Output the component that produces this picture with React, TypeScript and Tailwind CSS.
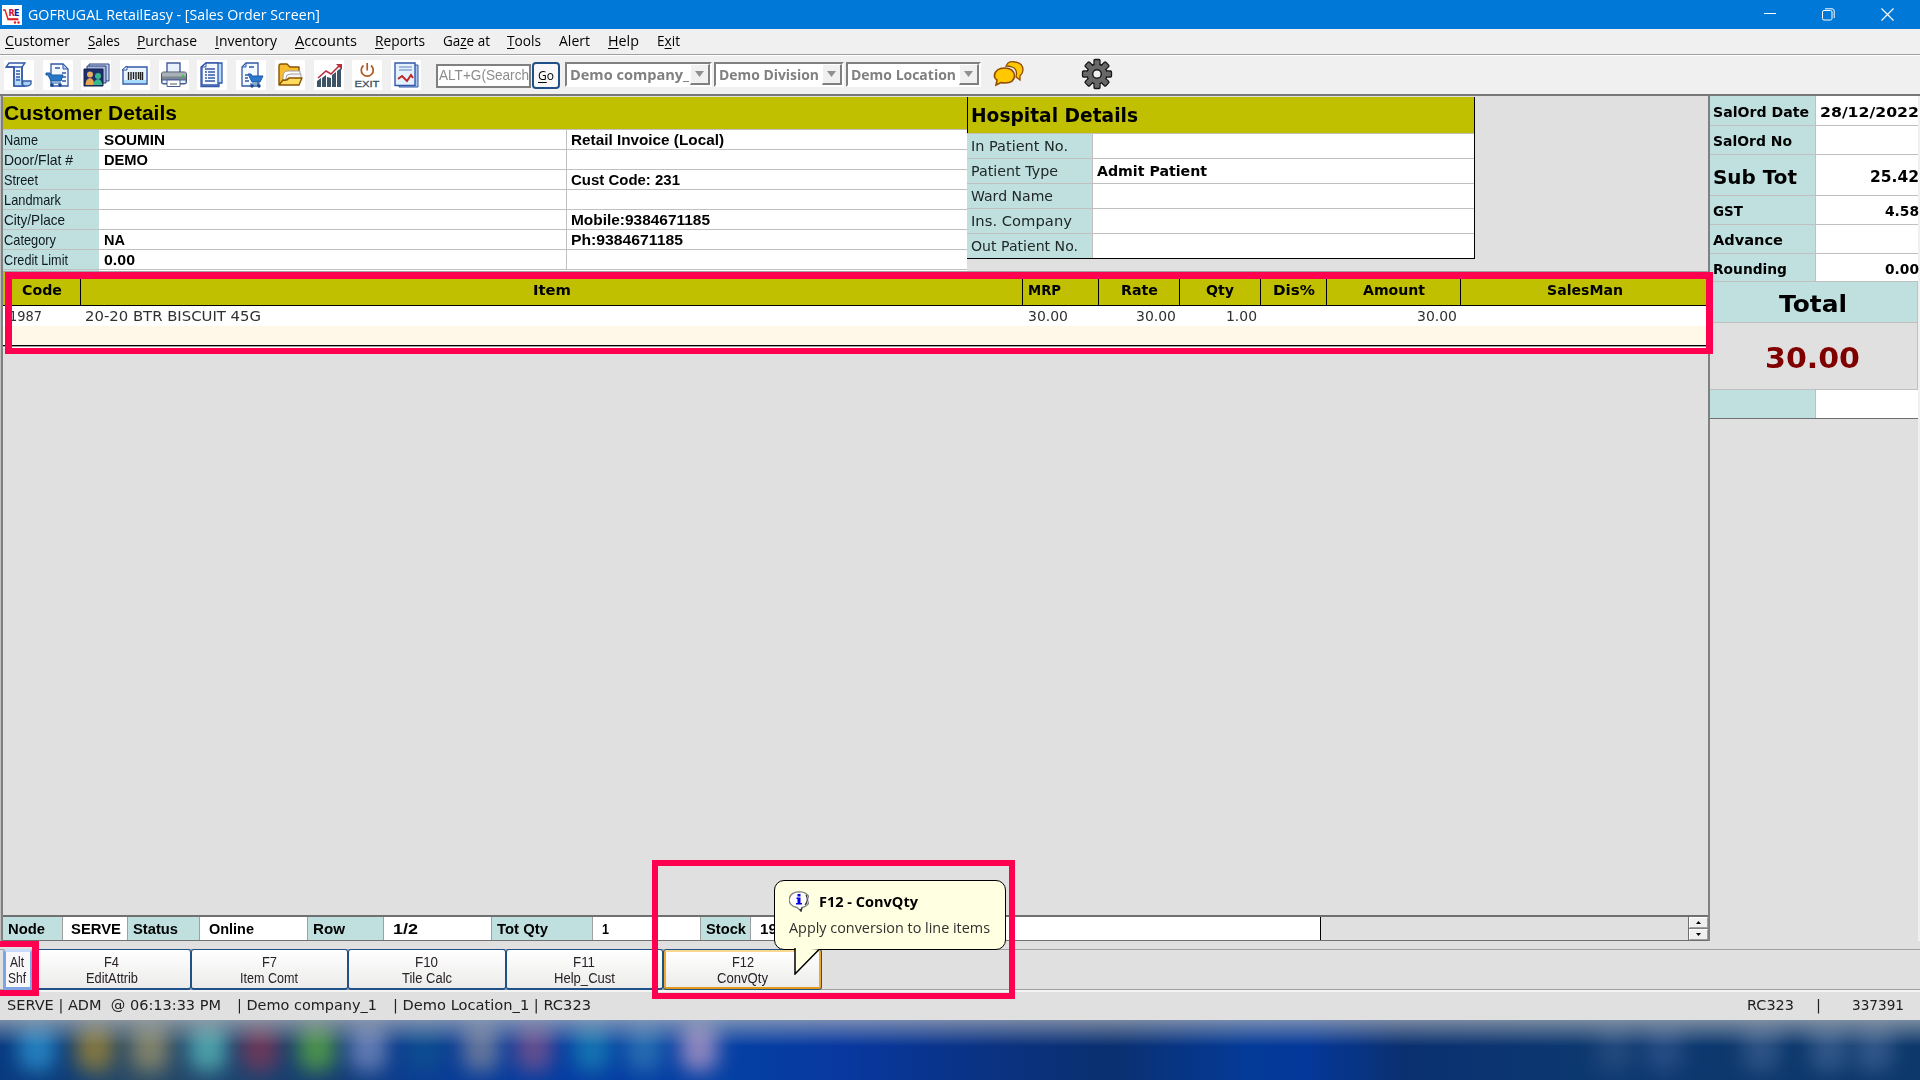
import { useLayoutEffect, useRef, type ReactNode } from "react";

const SANS = "font-['Liberation_Sans',sans-serif]";
const UI = "font-['Open_Sans',sans-serif]";
const WIDE = "font-['DejaVu_Sans',sans-serif]";

function Fit({ w, className = "", children }: { w: number; className?: string; children: ReactNode }) {
  const box = useRef<HTMLSpanElement>(null);
  const text = useRef<HTMLSpanElement>(null);
  useLayoutEffect(() => {
    if (!box.current || !text.current) return;
    text.current.style.transform = "none";
    const natural = text.current.getBoundingClientRect().width;
    box.current.style.width = `${w}px`;
    text.current.style.transform = `scaleX(${w / natural})`;
  }, [w]);
  return (
    <span ref={box} className={`inline-flex shrink-0 whitespace-pre leading-none ${className}`}>
      <span ref={text} className="inline-block shrink-0 origin-left">{children}</span>
    </span>
  );
}

function Logo() {
  return (
    <svg width="20" height="20" viewBox="0 0 20 20">
      <rect width="20" height="20" fill="#fff" />
      <path d="M1 5h2l3 9h10" fill="none" stroke="#e02020" strokeWidth="1.4" />
      <path d="M5.5 14.5h11" stroke="#e02020" strokeWidth="1.6" />
      <circle cx="13" cy="17.5" r="1.2" fill="#e02020" />
      <circle cx="16.5" cy="17.5" r="1.2" fill="#e02020" />
      <text x="6.5" y="10.5" fontSize="8" fontWeight="bold" fontFamily="DejaVu Sans" fill="#d01030" textLength="5.5">R</text>
      <text x="12" y="10.5" fontSize="8" fontWeight="bold" fontFamily="DejaVu Sans" fill="#1020a0" textLength="6">E</text>
    </svg>
  );
}

function TitleBar() {
  return (
    <header className="flex h-[29px] shrink-0 items-center bg-[#0078d7] text-white">
      <div className="ml-[2px] mt-px"><Logo /></div>
      <Fit w={292} className={`ml-[6px] text-[15px] ${UI}`}>GOFRUGAL RetailEasy - [Sales Order Screen]</Fit>
      <div className="ml-auto mr-[26px] flex items-center gap-[46px]">
        <svg width="12" height="12" viewBox="0 0 12 12" stroke="#fff"><path d="M0 4.5h12" /></svg>
        <svg width="13" height="13" viewBox="0 0 13 13" fill="none" stroke="#fff">
          <rect x="0.5" y="2.5" width="9.5" height="9.5" rx="1.5" />
          <path d="M3 .8h7a2.2 2.2 0 0 1 2.2 2.2v7" />
        </svg>
        <svg width="13" height="13" viewBox="0 0 13 13" stroke="#fff" strokeWidth="1.2"><path d="M.5.5l12 12M12.5.5l-12 12" /></svg>
      </div>
    </header>
  );
}

const menu: [string, string, string, number, string][] = [
  ["", "C", "ustomer", 65, "ml-[5px]"],
  ["", "S", "ales", 32, "ml-[18px]"],
  ["", "P", "urchase", 60, "ml-[17px]"],
  ["", "I", "nventory", 62, "ml-[18px]"],
  ["", "A", "ccounts", 62, "ml-[18px]"],
  ["", "R", "eports", 50, "ml-[18px]"],
  ["Ga", "z", "e at", 47, "ml-[18px]"],
  ["", "T", "ools", 34, "ml-[17px]"],
  ["Alert", "", "", 31, "ml-[18px]"],
  ["", "H", "elp", 31, "ml-[18px]"],
  ["E", "x", "it", 23, "ml-[18px]"],
];

function MenuBar() {
  return (
    <nav className={`flex h-[26px] shrink-0 items-center border-b border-[#a0a0a0] bg-[#f0f0f0] pb-[2px] text-sm text-black ${UI}`}>
      {menu.map(([a, u, b, w, m]) => (
        <Fit key={a + u + b} w={w} className={m}>
          {a}<span className="underline decoration-black decoration-[1px] underline-offset-[2px] [text-decoration-skip-ink:none]">{u}</span>{b}
        </Fit>
      ))}
    </nav>
  );
}

const paper = "#f4f9ff";
const ink = "#3358a8";

const toolIcons: ReactNode[] = [
  <g key="scroll" fill={paper} stroke={ink} strokeWidth="1.3">
    <path d="M5 3h16l-3 4v16q0 3 3 3H10V7H2z" />
    <path d="M10 18h8v5q0 3 3 3H10z" fill="#b8dcf8" stroke="none" />
    <path d="M10 7v19h11q-3 0-3-3V7M2 7h16M12 11h4M12 14h4M12 17h4M12 20h4" fill="none" strokeWidth="1.6" />
    <path d="M19 21h8v3q-1 2-4 2h-3q-2-1-1-5z" fill="#a8d0f0" />
  </g>,
  <g key="doccart">
    <path d="M8 4h12l5 5v17H8z" fill={paper} stroke={ink} strokeWidth="1.3" />
    <path d="M20 4v5h5z" fill="#b8d4f0" stroke={ink} />
    <path d="M12 8h5M19 13h4M19 17h4M19 21h4" stroke={ink} strokeWidth="1.5" />
    <path d="M3 13h4l1 2h12l-2 6H8L5 15H3z" fill="#2878c8" stroke="#1a5aa0" />
    <path d="M8 23h10" stroke="#1a5aa0" />
    <circle cx="9" cy="25" r="1.8" fill="#184888" /><circle cx="17" cy="25" r="1.8" fill="#184888" />
  </g>,
  <g key="people">
    <path d="M8 4h20v17H8z" fill="#c8d4ec" stroke="#2a4080" /><path d="M6 6h19v17H6z" fill="#a8b8dc" stroke="#2a4080" />
    <path d="M3 9h19v17H3z" fill="#1c2e6c" stroke="#14204c" />
    <circle cx="9" cy="14.5" r="3" fill="#e8b060" /><path d="M4.500 25q0-6 4.500-7 4.500 1 4 7z" fill="#e8a850" />
    <circle cx="17" cy="16" r="3" fill="#38b890" /><path d="M12 25q1-5 5-6 4 1 4.500 6z" fill="#38b890" />
  </g>,
  <g key="barcode">
    <path d="M6 7h21v17H3V10z" fill="#eaf4ff" stroke={ink} strokeWidth="1.4" />
    <path d="M4 20h22v3H4z" fill="#a8dcff" />
    <path d="M8.500 12v8M11 12v8M13.500 12v7M16 12v8M18.500 12v7M20.500 12v8M22.500 12v8" stroke="#202020" strokeWidth="1.4" />
    <path d="M2 10l5-4v4z" fill="#fff" stroke={ink} />
  </g>,
  <g key="printer">
    <path d="M8 3h13v10H8z" fill="#e8f2ff" stroke="#445c98" strokeWidth="1.4" />
    <rect x="2.500" y="12" width="25" height="12" rx="2" fill="#7c8690" stroke="#4a5560" />
    <path d="M3 12.500h24v4H3z" fill="#a8b0b8" /><circle cx="24" cy="16" r="1.300" fill="#30d030" />
    <path d="M3 20h24v3.500H3z" fill="#eaf4ff" stroke="#486098" />
    <path d="M8 20h13v6.500H8z" fill="#fff" stroke="#486098" /><path d="M11 24h7" stroke="#556" />
  </g>,
  <g key="report">
    <path d="M9 3h16v20h-3v3.500H4V7z" fill="#b8dcff" stroke={ink} strokeWidth="1.3" />
    <path d="M9 3h12v22H5V7z" fill={paper} stroke={ink} strokeWidth="1.3" /><path d="M5 7h4V3z" fill="#dcecff" stroke={ink} />
    <path d="M8 9h10M8 12h2m1 0h7M8 15h2m1 0h7M8 18h2m1 0h7M8 21h10" stroke={ink} strokeWidth="1.5" />
  </g>,
  <g key="cartdoc">
    <path d="M10 3h12v23H6V7z" fill={paper} stroke={ink} strokeWidth="1.3" /><path d="M6 7h4V3z" fill="#b8d4f0" stroke={ink} />
    <path d="M13 7h5M9 15h3M9 18h3M9 21h4" stroke={ink} strokeWidth="1.6" />
    <path d="M12 14h3l1 2h11l-3 6h-8z" fill="#2878d0" stroke="#1a5aa0" />
    <path d="M14 24h10" stroke="#1a5aa0" /><circle cx="16" cy="26" r="1.700" fill="#184888" /><circle cx="23" cy="26" r="1.700" fill="#184888" />
  </g>,
  <g key="folder" strokeLinejoin="round">
    <path d="M4 24V6q0-2 2-2h6l3 3h9v5v10z" fill="#f8bc30" stroke="#8a5400" strokeWidth="1.4" />
    <path d="M8 20v-3q0-6 5-6h12v9z" fill="#fff" stroke="#a0a0a0" />
    <path d="M11 19v-1q0-4 4-4h11v6z" fill="#f4f4f4" stroke="#a0a0a0" />
    <path d="M4 25l4-5q4 1 6-2h13l-3 7z" fill="#ffdc60" stroke="#8a5400" strokeWidth="1.4" />
  </g>,
  <g key="chart">
    <path d="M3 27v-6l4-3v9zM8 27v-9l4-3v12zM13 27V17l4 1v9zM18 27V15l4-3v15zM23 27V11l4-3v19z" fill="#3d5366" />
    <path d="M4 18l8-7 5 3 9-9" fill="none" stroke="#b83040" strokeWidth="1.6" /><path d="M22 4h6v6z" fill="#b83040" />
  </g>,
  <g key="exit">
    <path d="M11.500 5.500a6 6 0 1 0 7.500 0M15.200 3v7.500" fill="none" stroke="#b05820" strokeWidth="1.7" />
    <text x="2.500" y="27" fontSize="9.500" fontFamily="Liberation Sans" fill="#3d5366" stroke="#3d5366" strokeWidth=".3" textLength="25" lengthAdjust="spacingAndGlyphs">EXIT</text>
  </g>,
  <g key="graphdoc">
    <path d="M8 5h19v22H8z" fill="#b0c8f0" stroke={ink} />
    <path d="M4 3h20v22.500H4z" fill="#e4f2ff" stroke={ink} strokeWidth="1.4" />
    <path d="M8 7h13M8 10h13" stroke="#6080b8" strokeWidth="1.2" />
    <path d="M7 19l4-3 5 5 4-6 2 3" fill="none" stroke="#c02828" strokeWidth="2" />
  </g>,
];

function Combo({ text, w, box }: { text: string; w: number; box: string }) {
  return (
    <div className={`flex h-[25px] items-center border-2 border-b-white border-r-white border-l-[#808080] border-t-[#808080] bg-white ${box}`}>
      <Fit w={w} className={`ml-[3px] text-[14px] font-bold text-[#808080] ${UI}`}>{text}</Fit>
      <div className="ml-auto flex h-[21px] w-[20px] items-center justify-center border border-b-2 border-r-2 border-[#808080] border-l-white border-t-white bg-[#f0f0f0]">
        <svg width="9" height="6" viewBox="0 0 9 6"><path d="M0 0h9L4.500 6z" fill="#909090" /></svg>
      </div>
    </div>
  );
}

function Gear() {
  const teeth = [0, 45, 90, 135, 180, 225, 270, 315];
  return (
    <svg width="32" height="32" viewBox="-16 -16 32 32">
      {teeth.map((a) => <rect key={a} x="-3" y="-14.500" width="6" height="8" rx="1" fill="#686868" stroke="#181818" strokeWidth="1.300" transform={`rotate(${a})`} />)}
      <circle r="10" fill="#686868" stroke="#181818" strokeWidth="1.300" />
      {teeth.map((a) => <rect key={a} x="-2.300" y="-12" width="4.600" height="5" fill="#686868" transform={`rotate(${a})`} />)}
      <circle r="4.300" fill="#f0f0f0" stroke="#181818" strokeWidth="1.500" />
    </svg>
  );
}

function Toolbar() {
  return (
    <div className="flex h-[41px] shrink-0 items-start border-b-2 border-[#787878] border-t border-t-white bg-[#f0f0f0] pl-1">
      <div className="mt-[4px] flex gap-[8.7px]">
        {toolIcons.map((icon, i) => (
          <svg key={i} width="30" height="30" viewBox="0 0 30 30" className="bg-white">{icon}</svg>
        ))}
      </div>
      <div className="ml-[15px] mt-[8px] flex h-[24px] w-[95px] items-center border-2 border-[#808080] bg-white pb-[3px]">
        <Fit w={90} className="ml-px text-[15px] text-[#8c8c8c] font-['Liberation_Sans',sans-serif]">ALT+G(Search</Fit>
      </div>
      <div className={`ml-px mt-[6px] flex h-[27px] w-[28px] items-center justify-center rounded-[4px] border-2 border-[#1f5088] bg-[#f8f8f8] pb-px text-[13px] font-medium ${UI}`}>
        <Fit w={16}><span className="underline underline-offset-2">G</span>o</Fit>
      </div>
      <div className="ml-[5px] mt-[6px] flex gap-[2px]">
        <Combo text="Demo company_" w={119} box="w-[147px]" />
        <Combo text="Demo Division" w={100} box="w-[130px]" />
        <Combo text="Demo Location" w={105} box="w-[135px]" />
      </div>
      <svg width="32" height="28" viewBox="0 0 32 28" className="ml-[12px] mt-[4px]" fill="#ffc800" stroke="#904c00" strokeWidth="1.300">
        <path d="M13 6l2-3q3-2 7-1 8 1 8 8 0 3-3 6v4l-4-3q2-8-4-10-2-1-6-1z" />
        <path d="M11.500 8q9 0 10 7.500 0 7.500-10 7.500-2 0-3.500-.5L3 25l1-5q-3-2-2.500-5Q3 8 11.500 8z" strokeWidth="1.600" />
      </svg>
      <div className="ml-[56px] mt-[2px]"><Gear /></div>
    </div>
  );
}

type Cell = [string, number] | null;
const customer: { label: [string, number]; value: Cell; extra: Cell }[] = [
  { label: ["Name", 34], value: ["SOUMIN", 61], extra: ["Retail Invoice (Local)", 153] },
  { label: ["Door/Flat #", 69], value: ["DEMO", 44], extra: null },
  { label: ["Street", 34], value: null, extra: ["Cust Code: 231", 109] },
  { label: ["Landmark", 57], value: null, extra: null },
  { label: ["City/Place", 61], value: null, extra: ["Mobile:9384671185", 139] },
  { label: ["Category", 52], value: ["NA", 21], extra: ["Ph:9384671185", 112] },
  { label: ["Credit Limit", 64], value: ["0.00", 31], extra: null },
];

function CustomerDetails() {
  return (
    <section className={`w-[964px] shrink-0 ${SANS}`}>
      <div className="flex h-[32px] items-center bg-[#c0c000] pl-px">
        <Fit w={173} className="text-[20px] font-bold">Customer Details</Fit>
      </div>
      {customer.map((r) => (
        <div key={r.label[0]} className="flex h-[20px] border-t border-[#c0c0c0] bg-white text-[14.500px]">
          <div className="flex w-[96px] items-center bg-[#c0e0e0] pl-px pt-[2px] text-[#101820]"><Fit w={r.label[1]}>{r.label[0]}</Fit></div>
          <div className="flex w-[468px] items-center border-r border-[#c0c0c0] pl-[5px] pt-[2px] font-bold">{r.value && <Fit w={r.value[1]}>{r.value[0]}</Fit>}</div>
          <div className="flex flex-1 items-center pl-[4px] pt-[2px] font-bold">{r.extra && <Fit w={r.extra[1]}>{r.extra[0]}</Fit>}</div>
        </div>
      ))}
      <div className="flex h-[2px] border-t border-[#c0c0c0] bg-white"><div className="w-[96px] bg-[#c0e0e0]" /></div>
    </section>
  );
}

const hospital: [string, number][] = [
  ["In Patient No.", 97], ["Patient Type", 87], ["Ward Name", 82], ["Ins. Company", 101], ["Out Patient No.", 107],
];

function HospitalDetails() {
  return (
    <section className={`h-[162px] w-[508px] shrink-0 border-b border-r border-black ${WIDE}`}>
      <div className="flex h-[36px] items-center border-l border-black bg-[#c0c000] pl-[3px] pt-px">
        <Fit w={167} className="text-[19.500px] font-bold">Hospital Details</Fit>
      </div>
      {hospital.map(([t, w], i) => (
        <div key={t} className="flex h-[25px] border-t border-[#c0c0c0] bg-white text-[13.500px]">
          <div className="flex w-[126px] items-center border-r border-[#c0c0c0] bg-[#c0e0e0] pl-[4px] pt-[2px] text-[#202828]"><Fit w={w}>{t}</Fit></div>
          <div className="flex items-center pl-[4px] pt-[2px] font-bold">{i === 1 && <Fit w={110}>Admit Patient</Fit>}</div>
        </div>
      ))}
    </section>
  );
}

const columns: { name: string; w: number; box: string; val?: [string, number]; cell: string }[] = [
  { name: "Code", w: 40, box: "w-[78px] justify-center border-r pl-px", val: ["1987", 33], cell: "w-[78px] pl-[6px]" },
  { name: "Item", w: 38, box: "w-[942px] justify-center border-r", val: ["20-20 BTR BISCUIT 45G", 176], cell: "w-[942px] pl-[4px]" },
  { name: "MRP", w: 33, box: "w-[76px] pl-[5px] border-r", val: ["30.00", 40], cell: "w-[76px] pl-[5px]" },
  { name: "Rate", w: 37, box: "w-[81px] justify-center border-r", val: ["30.00", 40], cell: "w-[81px] justify-end pr-[4px]" },
  { name: "Qty", w: 28, box: "w-[81px] justify-center border-r", val: ["1.00", 31], cell: "w-[81px] justify-end pr-[4px]" },
  { name: "Dis%", w: 42, box: "w-[66px] justify-center border-r", cell: "w-[66px]" },
  { name: "Amount", w: 62, box: "w-[134px] justify-center border-r", val: ["30.00", 40], cell: "w-[134px] justify-end pr-[4px]" },
  { name: "SalesMan", w: 76, box: "flex-1 justify-center", cell: "flex-1" },
];

function ItemGrid() {
  return (
    <section className={`border-t border-[#a0a0a0] ${WIDE}`}>
      <div className="flex h-[34px] border-b border-black bg-[#c0c000] text-[13.500px] font-bold">
        {columns.map((c) => (
          <div key={c.name} className={`flex items-center border-black pt-[5px] ${c.box}`}><Fit w={c.w}>{c.name}</Fit></div>
        ))}
      </div>
      <div className="flex h-[20px] bg-white text-[13.500px] text-[#303030]">
        {columns.map((c) => (
          <div key={c.name} className={`flex items-center pt-[2px] ${c.cell}`}>{c.val && <Fit w={c.val[1]}>{c.val[0]}</Fit>}</div>
        ))}
      </div>
      <div className="h-[20px] border-b border-black bg-[#fff8e8]" />
      <div className="h-[2px] border-b border-white bg-[#a0a0a0]" />
    </section>
  );
}

const footer: { t: string; w: number; box: string }[] = [
  { t: "Node", w: 37, box: "w-[60px] bg-[#c0e0e0] pl-[5px]" },
  { t: "SERVE", w: 50, box: "w-[65px] pl-[8px]" },
  { t: "Status", w: 45, box: "w-[72px] bg-[#c0e0e0] pl-[5px]" },
  { t: "Online", w: 45, box: "w-[108px] pl-[9px]" },
  { t: "Row", w: 32, box: "w-[76px] bg-[#c0e0e0] pl-[5px]" },
  { t: "1/2", w: 25, box: "w-[108px] pl-[9px]" },
  { t: "Tot Qty", w: 51, box: "w-[101px] bg-[#c0e0e0] pl-[5px]" },
  { t: "1", w: 7, box: "w-[108px] pl-[9px]" },
  { t: "Stock", w: 40, box: "w-[50px] bg-[#c0e0e0] pl-[5px]" },
  { t: "19", w: 17, box: "w-[570px] pl-[9px]" },
];

function GridFooter() {
  return (
    <div className={`flex h-[26px] shrink-0 border-b border-t-2 border-[#707070] ${SANS}`}>
      {footer.map((f, i) => (
        <div key={f.t} className={`flex items-center pt-px text-[14px] font-bold ${f.box} ${i === 9 ? "border-r border-black" : "border-r border-[#a0a0a0]"} ${i % 2 ? "bg-white" : ""}`}>
          <Fit w={f.w}>{f.t}</Fit>
        </div>
      ))}
      <div className="flex-1" />
      <div className="flex w-[20px] flex-col gap-px border-l border-[#707070] bg-[#808080]">
        {["M0 3h5L2.500 0z", "M0 0h5L2.500 3z"].map((d) => (
          <div key={d} className="flex flex-1 items-center justify-center border border-b-[#a0a0a0] border-r-[#a0a0a0] border-l-white border-t-white bg-[#f0f0f0]">
            <svg width="5" height="3" viewBox="0 0 5 3"><path d={d} /></svg>
          </div>
        ))}
      </div>
    </div>
  );
}

const totals: { l: string; lw: number; v?: string; vw?: number; h: string; lc?: string; vc?: string }[] = [
  { l: "SalOrd Date", lw: 96, v: "28/12/2022", vw: 99, h: "h-[30px]" },
  { l: "SalOrd No", lw: 79, h: "h-[29px]" },
  { l: "Sub Tot", lw: 84, v: "25.42", vw: 49, h: "h-[41px]", lc: "text-[20px]", vc: "text-[15px]" },
  { l: "GST", lw: 30, v: "4.58", vw: 34, h: "h-[29px]" },
  { l: "Advance", lw: 70, h: "h-[29px]" },
  { l: "Rounding", lw: 74, v: "0.00", vw: 34, h: "h-[28px]" },
];

function Totals() {
  return (
    <aside className={`flex w-[208px] shrink-0 flex-col font-bold ${WIDE}`}>
      {totals.map((r) => (
        <div key={r.l} className={`flex border-b border-[#c0c0c0] bg-white text-[13.500px] ${r.h}`}>
          <div className={`flex w-[106px] items-center border-r border-[#c0c0c0] bg-[#c0e0e0] pl-[3px] pt-[4px] ${r.lc ?? ""}`}><Fit w={r.lw}>{r.l}</Fit></div>
          <div className={`-mr-px flex flex-1 items-center justify-end pt-[4px] ${r.vc ?? ""}`}>{r.v && <Fit w={r.vw ?? 0}>{r.v}</Fit>}</div>
        </div>
      ))}
      <div className="flex h-[41px] items-center justify-center border-b border-r border-[#c0c0c0] bg-[#c0e0e0] pr-[2px] pt-[4px] text-[23px]"><Fit w={68}>Total</Fit></div>
      <div className="flex h-[67px] items-center justify-center border-b border-r border-[#c0c0c0] pr-[2px] pt-[4px] text-[29px] text-[#800000]"><Fit w={95}>30.00</Fit></div>
      <div className="flex h-[29px] border-b border-[#707070] bg-white"><div className="w-[106px] border-r border-[#c0c0c0] bg-[#c0e0e0]" /></div>
    </aside>
  );
}

const keys: [string, number, string, number][] = [
  ["F4", 15, "EditAttrib", 52], ["F7", 15, "Item Comt", 58], ["F10", 23, "Tile Calc", 50], ["F11", 22, "Help_Cust", 61], ["F12", 22, "ConvQty", 51],
];

function KeyBar() {
  return (
    <div className={`flex h-[41px] shrink-0 border-b border-t border-[#a0a0a0] pl-[3px] text-[14px] text-[#282028] ${SANS}`}>
      <div className="-my-px flex w-[30px] flex-col items-center gap-[2px] rounded-[3px] border-[3px] border-[#7fa4e4] border-t-[#c8dcfa] bg-[#f8f8f8] pr-[2px] pt-[3px]">
        <Fit w={14}>Alt</Fit><Fit w={18}>Shf</Fit>
      </div>
      {keys.map(([k, kw, n, nw], i) => (
        <div
          key={k}
          className={`-my-px flex flex-col items-center gap-[2px] rounded-[3px] bg-gradient-to-b from-white to-[#ececea] ${
            i === 4
              ? "w-[159px] border-[3px] border-x-[#eeaa30] border-b-[#e09a18] border-t-[#fbd890] pt-[3px] outline outline-1 -outline-offset-1 outline-[#1f5088]"
              : "w-[157.500px] border border-b-2 border-[#1f5088] pt-[5px]"
          }`}
        >
          <Fit w={kw}>{k}</Fit><Fit w={nw}>{n}</Fit>
        </div>
      ))}
    </div>
  );
}

function StatusBar() {
  return (
    <div className={`flex h-[30px] shrink-0 items-center border-t-2 border-[#f4f4f4] bg-[#e0e0e0] pl-[7px] text-[13.500px] text-[#202020] ${WIDE}`}>
      <Fit w={214}>SERVE | ADM  @ 06:13:33 PM</Fit>
      <Fit w={140} className="ml-[16px]">| Demo company_1</Fit>
      <Fit w={198} className="ml-[16px]">| Demo Location_1 | RC323</Fit>
      <Fit w={47} className="ml-auto">RC323</Fit>
      <Fit w={5} className="ml-[22px]">|</Fit>
      <Fit w={52} className="ml-[31px] mr-[16px]">337391</Fit>
    </div>
  );
}

const glows: string[] = [
  "left-[18px] bg-[#2a8ccc]", "left-[76px] bg-[#94803a]", "left-[131px] bg-[#8f8c6c]", "left-[189px] bg-[#55b0b4]",
  "left-[241px] bg-[#783858]", "left-[298px] bg-[#55a048]", "left-[349px] bg-[#6f86bc]", "left-[405px] bg-[#0f5090]",
  "left-[462px] bg-[#74809c]", "left-[515px] bg-[#74528e]", "left-[573px] bg-[#187cb4]", "left-[625px] bg-[#2c74b4]", "left-[680px] bg-[#a492c4]",
  "left-[1596px] bg-[#264c80]", "left-[1645px] bg-[#2c5088]", "left-[1742px] bg-[#345888]", "left-[1810px] bg-[#385c8c]", "left-[1855px] bg-[#385c8c]",
];

function Taskbar() {
  return (
    <div className="relative h-[60px] shrink-0 overflow-hidden bg-[linear-gradient(90deg,#083a80_0%,#0c3c78_3%,#2a4a64_7%,#1c4470_12%,#143c70_17%,#0c3c90_21%,#053ca0_28%,#0540a4_38%,#0838a0_44%,#0a3280_52%,#0a3070_58%,#043a98_65%,#04389a_68%,#0a3070_73%,#0c3870_82%,#0c386c_100%)]">
      {glows.map((g) => <div key={g} className={`absolute top-[2px] h-[50px] w-[38px] rounded-[16px] opacity-85 blur-[10px] ${g}`} />)}
      <div className="absolute inset-x-0 top-0 h-[26px] bg-gradient-to-b from-[#c0c0c0]/60 to-transparent" />
    </div>
  );
}

function Balloon() {
  return (
    <div className={`absolute left-[774px] top-[880px] h-[70px] w-[232px] rounded-[10px] border-[1.500px] border-black bg-[#ffffe1] pl-[14px] ${UI}`}>
      <div className="flex items-center pt-[10px]">
        <svg width="20" height="21" viewBox="0 0 20 21" className="shrink-0">
          <path d="M10 1a8.500 7.500 0 0 1 3 15.500L12 20l-4-3.500A8.500 7.500 0 0 1 10 1z" fill="#fff" stroke="#808080" strokeWidth="1.300" />
          <path d="M13 16.500L12 20l-1-2M17 4q3 6-1 10" fill="none" stroke="#303030" strokeWidth="1.200" />
          <path d="M8.500 3h3v2.500h-3zM7.500 6.500h4V12h1.500v1.500H7V12h1.500V8h-1z" fill="#0000e8" />
        </svg>
        <Fit w={99} className="ml-[10px] mt-px text-[14px] font-bold">F12 - ConvQty</Fit>
      </div>
      <Fit w={201} className="mt-[9px] text-[14px] text-[#303030]">Apply conversion to line items</Fit>
      <svg width="28" height="27" viewBox="0 0 28 27" className="absolute left-[19px] top-[67px]">
        <path d="M1 0v26L25 1.500" fill="#ffffe1" stroke="#000" strokeWidth="1.500" />
        <path d="M2 0h24L25 1H2z" fill="#ffffe1" />
      </svg>
    </div>
  );
}

export default function App() {
  return (
    <div className="relative flex h-[1080px] w-[1920px] flex-col overflow-hidden bg-[#e0e0e0] text-black">
      <TitleBar />
      <MenuBar />
      <Toolbar />
      <main className="flex h-[845px] shrink-0 border-l border-[#c0c0c0]">
        <div className="flex w-[1709px] shrink-0 flex-col border-l-2 border-r-2 border-[#808080] pt-px">
          <div className="flex h-[174px] shrink-0">
            <CustomerDetails />
            <HospitalDetails />
          </div>
          <ItemGrid />
          <div className="flex-1" />
          <GridFooter />
        </div>
        <Totals />
        <div className="w-[2px] bg-[#f0f0f0]" />
      </main>
      <div className="h-[8px] shrink-0" />
      <KeyBar />
      <StatusBar />
      <Taskbar />
      <div className="absolute left-[5px] top-[272px] h-[82px] w-[1708px] border-[7px] border-b-[6px] border-[#ff0050]" />
      <div className="absolute left-0 top-[941px] h-[55px] w-[39px] border-y-[6px] border-r-[7px] border-[#ff0050]" />
      <div className="absolute left-[652px] top-[860px] h-[139px] w-[363px] border-[6px] border-[#ff0050]" />
      <Balloon />
    </div>
  );
}
